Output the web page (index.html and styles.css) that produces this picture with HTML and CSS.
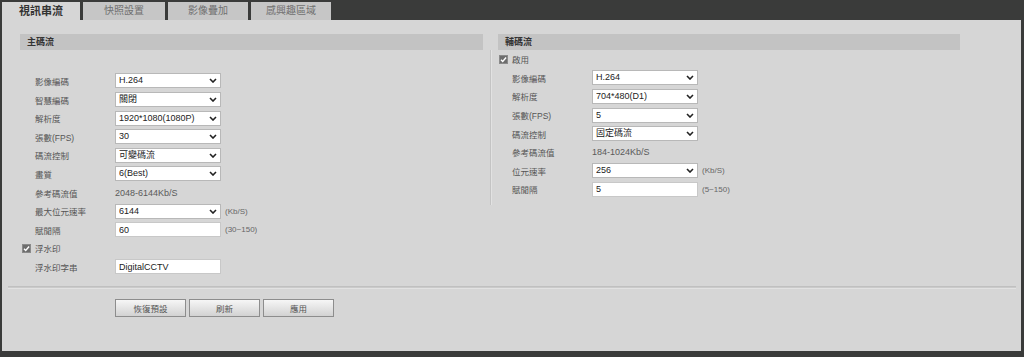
FILE: index.html
```html
<!DOCTYPE html>
<html lang="zh-Hant">
<head>
    <meta charset="UTF-8">
    <meta name="viewport" content="width=device-width, initial-scale=1.0">
    <title>視訊串流</title>
    <link rel="stylesheet" href="styles.css">
</head>
<body>
<div class="frame">
    <div class="tabs">
        <div class="tab active">視訊串流</div>
        <div class="tab t2">快照設置</div>
        <div class="tab t3">影像疊加</div>
        <div class="tab t4">感興趣區域</div>
    </div>

    <div class="panel">
        <div class="columns">
            <div class="col left">
                <div class="section-head">主碼流</div>
                <div class="rows spaced">
                    <div class="row"><span class="label">影像編碼</span>
                        <span class="select"><select><option>H.264</option></select><svg class="chev" width="8" height="5" viewBox="0 0 8 5"><path d="M1 1l3 3 3-3" fill="none" stroke="#222" stroke-width="1.6"/></svg></span></div>
                    <div class="row"><span class="label">智慧編碼</span>
                        <span class="select"><select><option>關閉</option></select><svg class="chev" width="8" height="5" viewBox="0 0 8 5"><path d="M1 1l3 3 3-3" fill="none" stroke="#222" stroke-width="1.6"/></svg></span></div>
                    <div class="row"><span class="label">解析度</span>
                        <span class="select"><select><option>1920*1080(1080P)</option></select><svg class="chev" width="8" height="5" viewBox="0 0 8 5"><path d="M1 1l3 3 3-3" fill="none" stroke="#222" stroke-width="1.6"/></svg></span></div>
                    <div class="row"><span class="label">張數(FPS)</span>
                        <span class="select"><select><option>30</option></select><svg class="chev" width="8" height="5" viewBox="0 0 8 5"><path d="M1 1l3 3 3-3" fill="none" stroke="#222" stroke-width="1.6"/></svg></span></div>
                    <div class="row"><span class="label">碼流控制</span>
                        <span class="select"><select><option>可變碼流</option></select><svg class="chev" width="8" height="5" viewBox="0 0 8 5"><path d="M1 1l3 3 3-3" fill="none" stroke="#222" stroke-width="1.6"/></svg></span></div>
                    <div class="row"><span class="label">畫質</span>
                        <span class="select"><select><option>6(Best)</option></select><svg class="chev" width="8" height="5" viewBox="0 0 8 5"><path d="M1 1l3 3 3-3" fill="none" stroke="#222" stroke-width="1.6"/></svg></span></div>
                    <div class="row"><span class="label">參考碼流值</span><span class="value">2048-6144Kb/S</span></div>
                    <div class="row"><span class="label">最大位元速率</span>
                        <span class="select"><select><option>6144</option></select><svg class="chev" width="8" height="5" viewBox="0 0 8 5"><path d="M1 1l3 3 3-3" fill="none" stroke="#222" stroke-width="1.6"/></svg></span><span class="unit">(Kb/S)</span></div>
                    <div class="row"><span class="label">賦閒隔</span><input class="field" type="text" value="60"><span class="unit">(30~150)</span></div>
                    <div class="row check-row"><svg class="check" width="9" height="9" viewBox="0 0 9 9"><rect x="0.5" y="0.5" width="8" height="8" fill="#6d6d6d" stroke="#8a8a8a"/><path d="M2 4.7l1.7 1.7 3.4-3.9" fill="none" stroke="#fff" stroke-width="1.4"/></svg><span>浮水印</span></div>
                    <div class="row"><span class="label">浮水印字串</span><input class="field" type="text" value="DigitalCCTV"></div>
                </div>
            </div>

            <div class="divider"></div>

            <div class="col right">
                <div class="section-head">輔碼流</div>
                <div class="rows">
                    <div class="row check-row"><svg class="check" width="9" height="9" viewBox="0 0 9 9"><rect x="0.5" y="0.5" width="8" height="8" fill="#6d6d6d" stroke="#8a8a8a"/><path d="M2 4.7l1.7 1.7 3.4-3.9" fill="none" stroke="#fff" stroke-width="1.4"/></svg><span>啟用</span></div>
                    <div class="row"><span class="label">影像編碼</span>
                        <span class="select"><select><option>H.264</option></select><svg class="chev" width="8" height="5" viewBox="0 0 8 5"><path d="M1 1l3 3 3-3" fill="none" stroke="#222" stroke-width="1.6"/></svg></span></div>
                    <div class="row"><span class="label">解析度</span>
                        <span class="select"><select><option>704*480(D1)</option></select><svg class="chev" width="8" height="5" viewBox="0 0 8 5"><path d="M1 1l3 3 3-3" fill="none" stroke="#222" stroke-width="1.6"/></svg></span></div>
                    <div class="row"><span class="label">張數(FPS)</span>
                        <span class="select"><select><option>5</option></select><svg class="chev" width="8" height="5" viewBox="0 0 8 5"><path d="M1 1l3 3 3-3" fill="none" stroke="#222" stroke-width="1.6"/></svg></span></div>
                    <div class="row"><span class="label">碼流控制</span>
                        <span class="select"><select><option>固定碼流</option></select><svg class="chev" width="8" height="5" viewBox="0 0 8 5"><path d="M1 1l3 3 3-3" fill="none" stroke="#222" stroke-width="1.6"/></svg></span></div>
                    <div class="row"><span class="label">參考碼流值</span><span class="value">184-1024Kb/S</span></div>
                    <div class="row"><span class="label">位元速率</span>
                        <span class="select"><select><option>256</option></select><svg class="chev" width="8" height="5" viewBox="0 0 8 5"><path d="M1 1l3 3 3-3" fill="none" stroke="#222" stroke-width="1.6"/></svg></span><span class="unit">(Kb/S)</span></div>
                    <div class="row"><span class="label">賦閒隔</span><input class="field" type="text" value="5"><span class="unit">(5~150)</span></div>
                </div>
            </div>
        </div>

        <div class="groove"></div>

        <div class="actions">
            <button type="button">恢復預設</button>
            <button type="button">刷新</button>
            <button type="button">應用</button>
        </div>
    </div>
</div>
</body>
</html>
```

FILE: styles.css
```css
body { margin: 0; background: #3a3b3a; font-family: "Liberation Sans", "Noto Sans CJK TC", sans-serif; font-size: 8.5px; color: #333; }
.frame { width: 1024px; height: 357px; overflow: hidden; }

.tabs { display: flex; height: 20px; padding: 2px 0 0 2px; box-sizing: border-box; gap: 3px; }
.tab { height: 18px; line-height: 18px; text-align: center; background: #c6c6c6; color: #707070; font-size: 10px; }
.tab.active { width: 78px; background: #d6d6d6; color: #333; font-weight: bold; font-size: 11px; }
.tab.t2 { width: 82px; }
.tab.t3 { width: 80px; }
.tab.t4 { width: 80px; }

.panel { background: #d6d6d6; margin: 0 3px 0 2px; height: 331px; padding-top: 14px; box-sizing: border-box; }

.columns { display: flex; padding-left: 18px; }
.col.left { width: 463px; }
.col.right { width: 462px; }
.divider { width: 1px; height: 155px; margin: 16px 7px 0 7px; background: #c4c4c4; box-shadow: 1px 0 0 #e2e2e2; }

.section-head { height: 16px; line-height: 16px; background: #c3c3c3; padding-left: 7px; font-weight: bold; font-size: 9px; color: #333; }

.rows.spaced { padding-top: 21.7px; }
.row { display: flex; align-items: center; height: 18.6px; padding-left: 15px; color: #555; }
.right .row { padding-left: 14px; }
.label { width: 80px; flex: none; }
.value { color: #5a5a5a; font-size: 9px; }
.unit { margin-left: 4px; color: #666; font-size: 8px; }

.select { position: relative; display: block; width: 106px; height: 15px; }
.select select { -webkit-appearance: none; appearance: none; width: 100%; height: 15px; margin: 0; padding: 0 0 0 3px; border: 1px solid #b8b8b8; border-radius: 0; background: #fff; font-family: "Liberation Sans", "Noto Sans CJK TC", sans-serif; font-size: 9px; color: #222; line-height: 13px; }
.chev { position: absolute; right: 4px; top: 5px; pointer-events: none; }

.field { width: 106px; height: 15px; box-sizing: border-box; margin: 0; padding: 0 0 0 3px; border: 1px solid #c8c8c8; background: #fff; font-family: "Liberation Sans", "Noto Sans CJK TC", sans-serif; font-size: 9px; color: #222; }

.check-row { padding-left: 2px; }
.right .check-row { padding-left: 1px; }
.check { margin-right: 4px; flex: none; }

.groove { margin: 10px 5px 0 6px; height: 1px; background: #c0c0c0; border-bottom: 1px solid #cacaca; box-shadow: 0 1px 0 #e2e2e2; }

.actions { display: flex; gap: 3px; padding: 11px 0 0 113px; }
.actions button { width: 71px; height: 18px; padding: 0; border: 1px solid #8d8d8d; border-radius: 0; background: linear-gradient(#f6f6f6, #d2d2d2); font-family: "Liberation Sans", "Noto Sans CJK TC", sans-serif; font-size: 8.5px; color: #555; cursor: pointer; }
```
